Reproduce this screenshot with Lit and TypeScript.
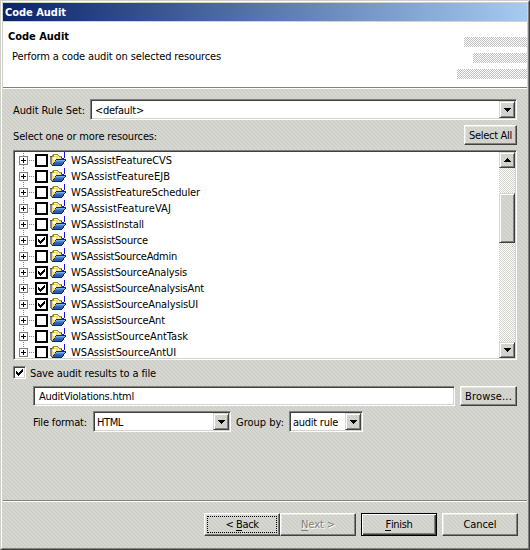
import { LitElement, html, svg, css } from "lit";
import { customElement, property, state } from "lit/decorators.js";

/** A run of text whose tracking is adjusted so that it spans a given width. */
@customElement("fit-text")
class FitText extends LitElement {
  @property({ type: Number }) w = 0;
  @property() text = "";
  @property() mnemonic = "";
  @state() private tracking = 0;
  static styles = css`
    :host { display: inline-block; white-space: pre; line-height: 13px; height: 13px; flex: none; }
    u { text-decoration: none; box-shadow: 0 1px 0 currentColor; display: inline-block; height: 12px; line-height: 13px; }
  `;
  firstUpdated() {
    const span = this.renderRoot.querySelector("span")!;
    const natural = span.getBoundingClientRect().width;
    if (this.w) this.tracking = (this.w - natural) / this.text.length;
  }
  render() {
    const i = this.mnemonic ? this.text.indexOf(this.mnemonic) : -1;
    const body = i < 0
      ? this.text
      : html`${this.text.slice(0, i)}<u>${this.mnemonic}</u>${this.text.slice(i + 1)}`;
    return html`<span style="letter-spacing:${this.tracking}px">${body}</span>`;
  }
}

const t = (text: string, w: number, mnemonic = "") =>
  html`<fit-text .text=${text} .w=${w} .mnemonic=${mnemonic}></fit-text>`;

const arrow = (up = false) => html`
  <svg class="arrow" width="7" height="4" viewBox="0 0 7 4" shape-rendering="crispEdges">
    ${up
      ? svg`<path d="M3 0h1v1h1v1h1v1h1v1H0V3h1V2h1V1h1z"/>`
      : svg`<path d="M0 0h7v1H6v1H5v1H4v1H3V3H2V2H1V1H0z"/>`}
  </svg>`;

const tick = svg`<path d="M0 2h1v1h1v1h1V3h1V2h1V1h1V0h1v3H6v1H5v1H4v1H3v1H2V6H1V5H0z"/>`;

const folder = html`
  <svg class="folder" width="16" height="16" viewBox="0 0 16 16" shape-rendering="crispEdges">
    <path fill="#9a8a3c" d="M3 2h5v1h1v1h3v4h-1v5H1V5H0V4h2V3h1z"/>
    <path fill="#f3df7c" d="M4 3h4v1h1v1h2v3H6L3 12H2V5h2z"/>
    <path fill="#fff8c4" d="M4 3h3v1H4zM3 5h3v3H3zM8 5h1v2H8z"/>
    <path fill="#15204a" d="M0 4h2v1H1v7h1v1H1v-1H0z" opacity=".55"/>
    <path fill="#10286a" d="M6 7h10v2h-1v1h-1v2h-1v1h-1v1H2v-1h1v-2h1v-1h1V8h1z"/>
    <path fill="#7fb0ea" d="M6 8h9v1H6z"/>
    <path fill="#4f86d2" d="M5 9h9v1H5z"/>
    <path fill="#3a6ec2" d="M5 10h8v1H5z"/>
    <path fill="#285bb0" d="M4 11h9v1h-1v1H3v-1h1z"/>
    <path fill="#1414e0" d="M14 0h1v6h-1zM12 6h2v1h-2zM11 5h1v1h-1z"/>
  </svg>`;

const RESOURCES: [string, number, boolean][] = [
  ["WSAssistFeatureCVS", 101, false],
  ["WSAssistFeatureEJB", 99, false],
  ["WSAssistFeatureScheduler", 129, false],
  ["WSAssistFeatureVAJ", 100, false],
  ["WSAssistInstall", 73, false],
  ["WSAssistSource", 77, true],
  ["WSAssistSourceAdmin", 106, false],
  ["WSAssistSourceAnalysis", 116, true],
  ["WSAssistSourceAnalysisAnt", 133, true],
  ["WSAssistSourceAnalysisUI", 127, true],
  ["WSAssistSourceAnt", 94, false],
  ["WSAssistSourceAntTask", 117, false],
  ["WSAssistSourceAntUI", 105, false],
];

@customElement("app-root")
class AppRoot extends LitElement {
  static styles = css`
    :host {
      display: block; width: 530px; height: 550px; color: #000;
      font: 11px/13px "DejaVu Sans Condensed", "DejaVu Sans", Tahoma, sans-serif;
      font-stretch: condensed;
    }
    * { box-sizing: border-box; }
    svg { display: block; flex: none; }
    .face {
      background:
        conic-gradient(at 1px 1px, transparent 75%, #cbcbc5 0) 0 0 / 4px 4px,
        conic-gradient(at 1px 1px, transparent 75%, #cbcbc5 0) 1px 1px / 4px 4px,
        conic-gradient(at 1px 1px, transparent 75%, #cbcbc5 0) 2px 2px / 4px 4px,
        conic-gradient(at 1px 1px, transparent 75%, #cbcbc5 0) 3px 3px / 4px 4px,
        #d6d6d0;
    }
    .window {
      height: 550px; border: 1px solid; border-color: #d0d0c8 #404040 #404040 #d0d0c8;
    }
    .inner {
      height: 548px; border: 1px solid; border-color: #fff #808080 #808080 #fff;
      padding: 1px; display: flex; flex-direction: column;
    }
    .title {
      height: 18px; margin-bottom: 1px; padding: 3px 2px; color: #fff; font-weight: bold;
      background: linear-gradient(90deg, #0a246a, #a6caf0);
    }
    .header {
      height: 65px; background: #fff; display: flex; justify-content: space-between;
    }
    .heading { padding: 8px 0 0 5px; }
    .heading b { display: block; height: 20px; }
    .heading p { margin: 0 0 0 4px; }
    .stripes {
      display: flex; flex-direction: column; align-items: flex-end; gap: 6px; padding-top: 15px;
    }
    .stripe {
      height: 10px; width: 63px;
      background: repeating-conic-gradient(#c0c0c0 0 25%, #fff 0 50%) 0 0 / 2px 2px;
    }
    .stripe.short { width: 54px; }
    .stripe.long { width: 70px; }
    .rule { height: 2px; background: #808080; border-bottom: 1px solid #fff; flex: none; }
    .content { flex: 1; padding: 10px 10px 0; }
    .row { display: flex; align-items: center; }
    .sunken {
      background: #fff; border: 1px solid;
      border-color: #808080 #fff #fff #808080;
      box-shadow: inset 1px 1px 0 #404040, inset -1px -1px 0 #d4d4cc;
    }
    .combo {
      height: 21px; display: flex; align-items: center; justify-content: space-between;
      padding: 0 1px 0 3px;
    }
    .raised {
      border: 1px solid; border-color: #d8d8d0 #404040 #404040 #d8d8d0;
      box-shadow: inset 1px 1px 0 #fff, inset -1px -1px 0 #808080;
      display: flex; align-items: center; justify-content: center; flex: none;
    }
    .drop { width: 16px; height: 17px; }
    .ruleset { height: 21px; }
    .ruleset .combo { width: 427px; margin-left: auto; padding-left: 4px; }
    .ruleset fit-text, .format fit-text { margin-top: 2px; }
    .push {
      border-color: #fff #404040 #404040 #fff;
      box-shadow: inset -1px -1px 0 #808080, inset 1px 1px 0 #e6e6e0;
    }
    .select { height: 20px; margin-top: 5px; justify-content: space-between; }
    .select > fit-text { margin-top: 3px; }
    .select .push { width: 53px; height: 20px; }
    .select .push fit-text, .file fit-text, .item fit-text { margin-top: 1px; }
    .tree {
      height: 210px; margin-top: 5px; display: flex; overflow: hidden; padding: 1px;
    }
    .items { flex: 1; height: 206px; overflow: hidden; }
    .item { height: 16px; display: flex; align-items: center; padding-left: 4px; }
    .folder { margin: 0 5px 0 2px; }
    .scroll {
      width: 16px; height: 206px; display: flex; flex-direction: column; align-items: stretch;
      background: repeating-conic-gradient(#d0d0c8 0 25%, #fff 0 50%) 0 0 / 2px 2px;
    }
    .step { height: 16px; }
    .thumb { height: 50px; margin-top: 25px; margin-bottom: auto; }
    .save { margin-top: 6px; height: 13px; }
    .save fit-text { margin-top: 2px; }
    .check {
      width: 13px; height: 13px; display: grid; place-items: center; margin-right: 4px; flex: none;
    }
    .file { margin: 7px 0 0 20px; height: 20px; justify-content: space-between; }
    .field { width: 422px; height: 20px; display: flex; align-items: center; padding-left: 5px; }
    .file .push { width: 57px; height: 20px; }
    .format { margin: 5px 0 0 20px; height: 21px; }
    .format .type { width: 138px; margin: 0 5px 0 6px; }
    .format .group { width: 74px; margin-left: 5px; }
    .buttons { height: 45px; padding: 11px 9px 0 0; display: flex; justify-content: flex-end; flex: none; }
    .buttons .push { width: 76px; height: 23px; position: relative; }
    .buttons .gap { margin-left: 5px; }
    .focus::after { content: ""; position: absolute; inset: 2px 2px; border: 1px dotted #000; }
    .default {
      border-color: #000; box-shadow: inset 1px 1px 0 #fff, inset -1px -1px 0 #404040, inset -2px -2px 0 #808080;
    }
    .off { color: #808080; text-shadow: 1px 1px 0 #fff; }
  `;

  render() {
    return html`
      <div class="window face"><div class="inner">
        <div class="title">${t("Code Audit", 61)}</div>
        <div class="header">
          <div class="heading">
            <b>${t("Code Audit", 61)}</b>
            <p>${t("Perform a code audit on selected resources", 209)}</p>
          </div>
          <div class="stripes">
            <div class="stripe"></div><div class="stripe short"></div><div class="stripe long"></div>
          </div>
        </div>
        <div class="rule"></div>
        <div class="content">
          <div class="row ruleset">
            ${t("Audit Rule Set:", 72)}
            <div class="sunken combo">${t("<default>", 49)}<div class="raised face drop">${arrow()}</div></div>
          </div>
          <div class="row select">
            ${t("Select one or more resources:", 144)}
            <div class="raised face push">${t("Select All", 43)}</div>
          </div>
          <div class="sunken tree">
            <div class="items">
              ${RESOURCES.map(([name, w, on], i) => html`
                <div class="item">
                  <svg width="29" height="16" viewBox="0 0 29 16" shape-rendering="crispEdges">
                    <path d="M4.5 ${i ? 0 : 1}V16" stroke="#808080" stroke-dasharray="1 1" fill="none"/>
                    <path d="M10 8.5h6" stroke="#808080" stroke-dasharray="1 1" fill="none"/>
                    <rect x=".5" y="4.5" width="8" height="8" fill="#fff" stroke="#808080"/>
                    <path d="M2 8h5v1H2zM4 6h1v5H4z"/>
                    <rect x="17" y="3" width="11" height="11" fill="#fff" stroke="#000" stroke-width="2"/>
                    ${on ? svg`<g transform="translate(19 5)">${tick}</g>` : ""}
                  </svg>
                  ${folder}${t(name, w)}
                </div>`)}
            </div>
            <div class="scroll">
              <div class="raised face step">${arrow(true)}</div>
              <div class="raised face thumb"></div>
              <div class="raised face step">${arrow()}</div>
            </div>
          </div>
          <div class="row save">
            <div class="sunken check">
              <svg width="7" height="7" viewBox="0 0 7 7" shape-rendering="crispEdges">${tick}</svg>
            </div>
            ${t("Save audit results to a file", 126)}
          </div>
          <div class="row file">
            <div class="sunken field">${t("AuditViolations.html", 95)}</div>
            <div class="raised face push">${t("Browse...", 47)}</div>
          </div>
          <div class="row format">
            ${t("File format:", 54)}
            <div class="sunken combo type">${t("HTML", 26)}<div class="raised face drop">${arrow()}</div></div>
            ${t("Group by:", 48)}
            <div class="sunken combo group">${t("audit rule", 45)}<div class="raised face drop">${arrow()}</div></div>
          </div>
        </div>
        <div class="rule"></div>
        <div class="buttons">
          <div class="raised face push focus">${t("< Back", 33, "B")}</div>
          <div class="raised face push off">${t("Next >", 34, "N")}</div>
          <div class="raised face push default gap">${t("Finish", 27, "F")}</div>
          <div class="raised face push gap">${t("Cancel", 33)}</div>
        </div>
      </div></div>`;
  }
}
